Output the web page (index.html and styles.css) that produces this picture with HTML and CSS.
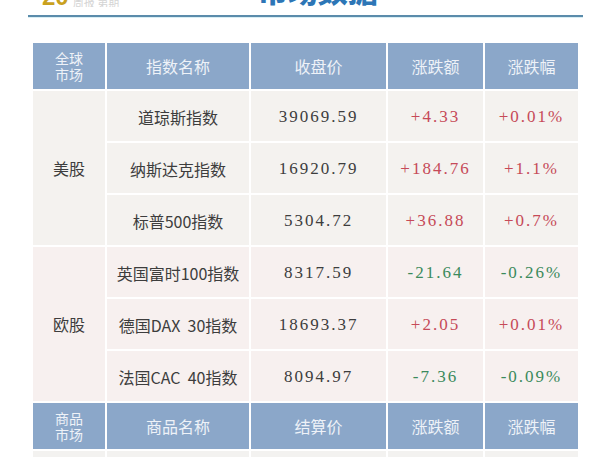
FILE: index.html
```html
<!DOCTYPE html>
<html lang="zh">
<head>
<meta charset="utf-8">
<link rel="stylesheet" href="styles.css">
</head>
<body>
<div class="page">
  <div class="masthead">
    <span class="issue">20</span>
    <span class="issue-sub">周报 第期</span>
    <span class="title">市场数据</span>
  </div>
  <div class="rule"></div>

  <div class="grid">
    <div class="hd hd-two">全球<br>市场</div>
    <div class="hd">指数名称</div>
    <div class="hd">收盘价</div>
    <div class="hd">涨跌额</div>
    <div class="hd">涨跌幅</div>

    <div class="cell market us span3">美股</div>
    <div class="cell us">道琼斯指数</div>
    <div class="cell us num">39069.59</div>
    <div class="cell us num up">+4.33</div>
    <div class="cell us num up">+0.01%</div>

    <div class="cell us">纳斯达克指数</div>
    <div class="cell us num">16920.79</div>
    <div class="cell us num up">+184.76</div>
    <div class="cell us num up">+1.1%</div>

    <div class="cell us">标普500指数</div>
    <div class="cell us num">5304.72</div>
    <div class="cell us num up">+36.88</div>
    <div class="cell us num up">+0.7%</div>

    <div class="cell market eu span3">欧股</div>
    <div class="cell eu">英国富时100指数</div>
    <div class="cell eu num">8317.59</div>
    <div class="cell eu num down">-21.64</div>
    <div class="cell eu num down">-0.26%</div>

    <div class="cell eu">德国DAX&nbsp;&nbsp;30指数</div>
    <div class="cell eu num">18693.37</div>
    <div class="cell eu num up">+2.05</div>
    <div class="cell eu num up">+0.01%</div>

    <div class="cell eu">法国CAC&nbsp;&nbsp;40指数</div>
    <div class="cell eu num">8094.97</div>
    <div class="cell eu num down">-7.36</div>
    <div class="cell eu num down">-0.09%</div>

    <div class="hd hd-two">商品<br>市场</div>
    <div class="hd">商品名称</div>
    <div class="hd">结算价</div>
    <div class="hd">涨跌额</div>
    <div class="hd">涨跌幅</div>

    <div class="cell tail"></div>
    <div class="cell tail"></div>
    <div class="cell tail"></div>
    <div class="cell tail"></div>
    <div class="cell tail"></div>
  </div>
</div>
</body>
</html>
```

FILE: styles.css
```css
html, body {
  margin: 0;
  padding: 0;
  background: #ffffff;
}

body {
  width: 610px;
  height: 457px;
  overflow: hidden;
  font-family: "Liberation Serif", "Noto Sans CJK SC", serif;
  color: #3a3a3a;
}

.masthead {
  height: 7px;
  overflow: hidden;
  display: flex;
  align-items: flex-end;
  padding-left: 42px;
}

.issue {
  font-family: "Liberation Sans", "Noto Sans CJK SC", sans-serif;
  font-weight: bold;
  font-size: 24px;
  line-height: 20px;
  color: #c9a11e;
}

.issue-sub {
  font-family: "Noto Sans CJK SC", sans-serif;
  font-size: 11px;
  line-height: 10px;
  color: #d4d4d4;
  margin-left: 4px;
  width: 185px;
}

.title {
  font-family: "Noto Sans CJK SC", sans-serif;
  font-weight: 900;
  font-size: 30px;
  line-height: 30px;
  color: #2d76b6;
  margin-bottom: 3px;
}

.rule {
  margin: 8px 27px 0 28px;
  height: 2px;
  background: #5b8cab;
  box-shadow: 0 1px 0 #d8eef4;
}

.grid {
  margin: 26px 0 0 33px;
  width: 545px;
  display: grid;
  grid-template-columns: 72px 142px 135px 95px 93px;
  grid-template-rows: 46px repeat(6, 50px) 46px 20px;
  gap: 2px;
}

.hd {
  background: #8ba7c9;
  color: #eef2f8;
  font-family: "Noto Sans CJK SC", serif;
  font-size: 16px;
  display: flex;
  align-items: center;
  justify-content: center;
  text-align: center;
}

.hd-two {
  font-size: 14px;
  line-height: 16px;
}

.cell {
  display: flex;
  align-items: center;
  justify-content: center;
  font-size: 16px;
  font-family: "Noto Sans CJK SC", serif;
  color: #3d3d3d;
  padding-top: 2px;
}

.us {
  background: #f4f2ef;
}

.eu {
  background: #f7f0ef;
}

.tail {
  background: #f3f2f0;
}

.span3 {
  grid-row: span 3;
}

.market {
  padding-top: 0;
}

.num {
  font-family: "Liberation Serif", serif;
  font-size: 17px;
  letter-spacing: 2px;
}

.up {
  color: #c64a58;
}

.down {
  color: #3b8a5c;
}
```
